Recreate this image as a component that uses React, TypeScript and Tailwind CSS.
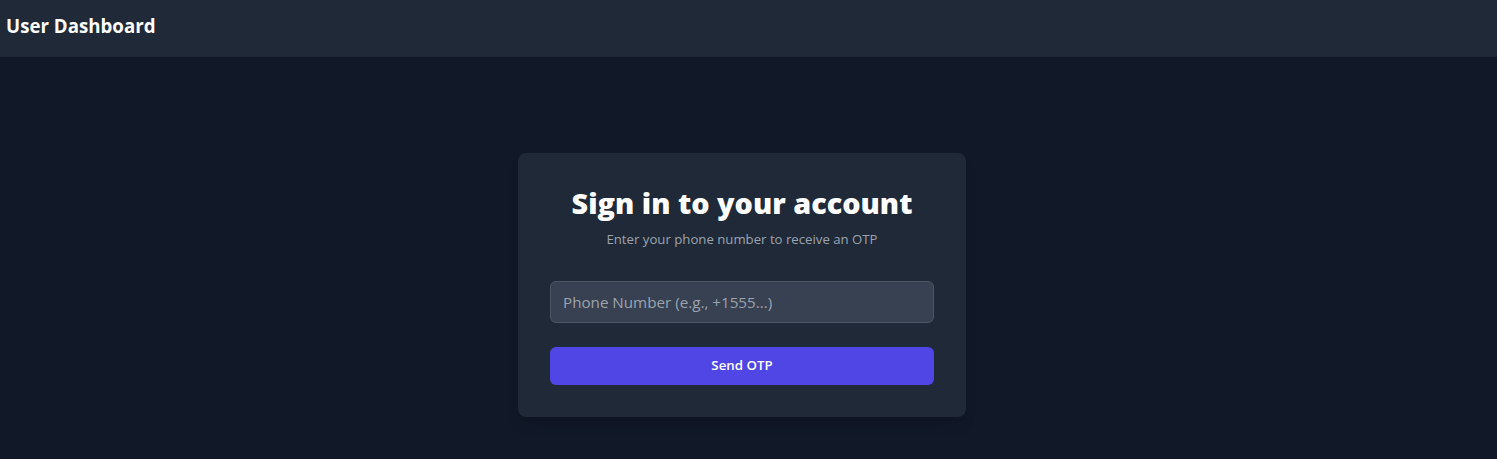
export default function App() {
  return (
    <div className="min-h-screen bg-[#111827] font-['Open_Sans','Noto_Sans',sans-serif] text-white">
      <header className="bg-[#1f2937] h-[57px] px-[6px] pb-[5px] flex items-center">
        <h1 className="text-[18.7px] leading-7 font-bold">User Dashboard</h1>
      </header>

      <main className="min-h-[calc(100vh-4px)] flex items-center justify-center pl-4 pr-[29px]">
        <div className="w-full max-w-md bg-[#1f2937] rounded-lg shadow-lg p-8">
          <div className="text-center">
            <h2 className="text-[28.8px] leading-9 font-extrabold">Sign in to your account</h2>
            <p className="mt-2 text-[13.2px] leading-5 text-[#9ca3af]">Enter your phone number to receive an OTP</p>
          </div>

          <form className="mt-8" onSubmit={(e) => e.preventDefault()}>
            <input
              type="tel"
              placeholder="Phone Number (e.g., +1555...)"
              className="block w-full h-[42px] px-3 py-2 bg-[#374151] border border-[#4b5563] rounded-md text-[15.2px] text-white placeholder-[#9ca3af] focus:outline-none"
            />
            <button
              type="submit"
              className="mt-6 w-full h-[38px] border border-transparent rounded-md bg-[#4f46e5] text-[13.3px] font-semibold text-white"
            >
              Send OTP
            </button>
          </form>
        </div>
      </main>
    </div>
  );
}
